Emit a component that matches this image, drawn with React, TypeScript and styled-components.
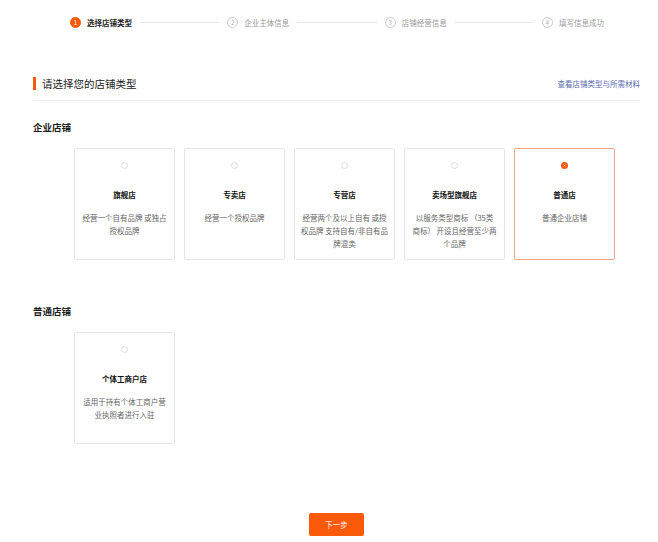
import React, { useState } from 'react';
import styled, { createGlobalStyle } from 'styled-components';

const GlobalStyle = createGlobalStyle`
  body { margin: 0; background: #fff; font-family: "Noto Sans CJK SC", "Noto Sans", sans-serif; color: #222; }
`

const Page = styled.div`
  width: 658px;
  height: 542px;
  padding: 15px 18px 0 33px;
  box-sizing: border-box;
  display: flex;
  flex-direction: column;
`
const Steps = styled.div`
  display: flex;
  align-items: center;
  padding: 0 36px 0 37px;
  height: 14px;
`
const Step = styled.div`
  display: flex;
  align-items: center;
  gap: 6px;
  font-size: 7.5px;
  white-space: nowrap;
  color: ${p => p.$active ? '#222' : '#999'};
  font-weight: ${p => p.$active ? 700 : 400};
`
const StepNum = styled.span`
  width: 11px;
  height: 11px;
  border-radius: 50%;
  box-sizing: border-box;
  display: flex;
  align-items: center;
  justify-content: center;
  font-size: 6px;
  font-weight: 400;
  color: ${p => p.$active ? '#fff' : '#aaa'};
  background: ${p => p.$active ? '#f55a0d' : '#fff'};
  border: 1px solid ${p => p.$active ? '#f55a0d' : '#ccc'};
`
const StepLine = styled.div`
  flex: 1;
  height: 1px;
  background: #e8e8e8;
  margin: 0 8px;
`
const Header = styled.div`
  margin-top: 47px;
  display: flex;
  align-items: center;
  justify-content: space-between;
  padding-bottom: 9px;
  border-bottom: 1px solid #eee;
`
const HeaderTitle = styled.div`
  display: flex;
  align-items: center;
  gap: 6px;
  font-size: 10.5px;
  color: #222;
  &::before {
    content: '';
    width: 3px;
    height: 13px;
    background: #f55a0d;
  }
`
const Link = styled.a`
  font-size: 7.5px;
  color: #5a6ab0;
`
const SectionTitle = styled.div`
  font-size: 9.5px;
  font-weight: 700;
  margin-top: ${p => p.$top}px;
`
const Cards = styled.div`
  display: flex;
  gap: 9px;
  margin-top: 14px;
  padding-left: 41px;
`
const Card = styled.div`
  width: 101px;
  height: 112px;
  box-sizing: border-box;
  border: 1px solid ${p => p.$selected ? '#f0a58a' : '#e6e6e6'};
  border-radius: 2px;
  display: flex;
  flex-direction: column;
  align-items: center;
  padding: 13px 5px 0;
  cursor: pointer;
`
const Radio = styled.span`
  width: 7px;
  height: 7px;
  border-radius: 50%;
  box-sizing: border-box;
  border: ${p => p.$on ? '2px solid #f55a0d' : '1px solid #ddd'};
  background: #fff;
  box-shadow: ${p => p.$on ? 'inset 0 0 0 1px #f55a0d' : 'none'};
`
const CardTitle = styled.div`
  margin-top: 20px;
  font-size: 7.5px;
  font-weight: 700;
  color: #111;
`
const CardDesc = styled.div`
  margin-top: 11px;
  font-size: 7.5px;
  line-height: 13px;
  color: #666;
  text-align: center;
`
const Footer = styled.div`
  margin-top: auto;
  margin-bottom: 6px;
  display: flex;
  justify-content: center;
`
const NextButton = styled.button`
  width: 55px;
  height: 23px;
  border: none;
  border-radius: 2px;
  background: #fb5a0b;
  color: #fff;
  font-size: 7.5px;
  font-family: inherit;
`

const steps = ['选择店铺类型', '企业主体信息', '店铺经营信息', '填写信息成功']

const enterprise = [
  { title: '旗舰店', desc: '经营一个自有品牌 或独占授权品牌' },
  { title: '专卖店', desc: '经营一个授权品牌' },
  { title: '专营店', desc: '经营两个及以上自有 或授权品牌 支持自有/非自有品牌混卖' },
  { title: '卖场型旗舰店', desc: '以服务类型商标 （35类\n商标） 开设且经营至少两\n个品牌' },
  { title: '普通店', desc: '普通企业店铺' },
]

const App = () => {
  const [selected, setSelected] = useState('普通店')

  const renderCard = (c: { title: string; desc: string }) => (
    <Card key={c.title} $selected={selected === c.title} onClick={() => setSelected(c.title)}>
      <Radio $on={selected === c.title} />
      <CardTitle>{c.title}</CardTitle>
      <CardDesc>
        {c.desc.split('\n').map((l, i) => <div key={i}>{l}</div>)}
      </CardDesc>
    </Card>
  )

  return (
    <Page>
      <GlobalStyle />
      <Steps>
        {steps.map((s, i) => (
          <React.Fragment key={s}>
            <Step $active={i === 0}>
              <StepNum $active={i === 0}>{i + 1}</StepNum>
              {s}
            </Step>
            {i < steps.length - 1 && <StepLine />}
          </React.Fragment>
        ))}
      </Steps>
      <Header>
        <HeaderTitle>请选择您的店铺类型</HeaderTitle>
        <Link>查看店铺类型与所需材料</Link>
      </Header>
      <SectionTitle $top={19}>企业店铺</SectionTitle>
      <Cards>{enterprise.map(renderCard)}</Cards>
      <SectionTitle $top={44}>普通店铺</SectionTitle>
      <Cards>{renderCard({ title: '个体工商户店', desc: '适用于持有个体工商户营\n业执照者进行入驻' })}</Cards>
      <Footer>
        <NextButton>下一步</NextButton>
      </Footer>
    </Page>
  )
}

export default App
